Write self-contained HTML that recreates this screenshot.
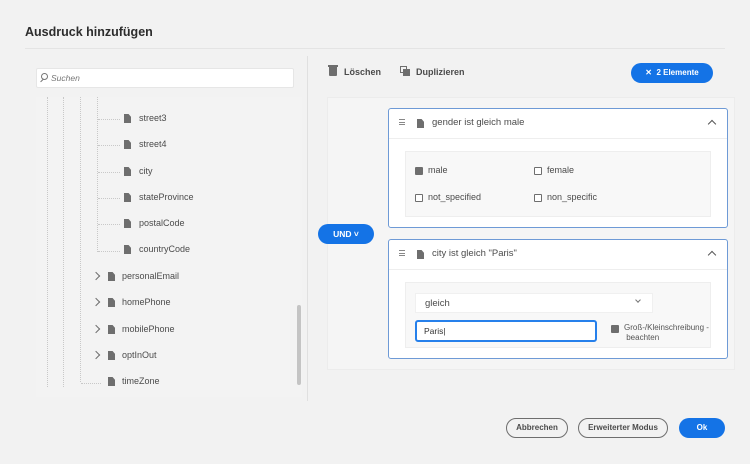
<!DOCTYPE html>
<html><head><meta charset="utf-8"><style>
*{box-sizing:border-box;margin:0;padding:0}
body{width:750px;height:464px;background:#f2f2f2;font-family:"Liberation Sans",sans-serif;color:#323232;position:relative;overflow:hidden;font-size:9px}
.a{position:absolute}
.doc{position:absolute;width:7px;height:9px;background:#6e6e6e;clip-path:polygon(0 0,65% 0,100% 30%,100% 100%,0 100%)}
.t{position:absolute;font-size:9px;color:#4b4b4b}
.vd{position:absolute;border-left:1px dotted #c8c8c8}
.hd{position:absolute;border-top:1px dotted #c8c8c8;width:22px}
.chev{position:absolute;width:6px;height:6px;border-right:1.5px solid #6e6e6e;border-top:1.5px solid #6e6e6e;transform:rotate(45deg)}
.card{position:absolute;left:388px;width:340px;background:#fff;border:1px solid #6e9ad6;border-radius:3px}
.hdr{height:30px;border-bottom:1px solid #eee;position:relative}
.ham{position:absolute;left:10px;top:10px;width:6px;height:6px;border-top:1px solid #888;border-bottom:1px solid #888}
.ham:after{content:"";position:absolute;left:0;top:2px;width:6px;border-top:1px solid #888}
.inner{position:absolute;left:16px;right:16px;background:#f8f8f8;border:1px solid #eee}
.cb{position:absolute;width:8px;height:8px;border:1.2px solid #6e6e6e;border-radius:1px;background:#fff}
.cb.on{background:#6e6e6e}
.btn{position:absolute;height:20px;border-radius:10px;font-size:8px;font-weight:bold;text-align:center;line-height:18px}
</style></head><body>
<div class="a" style="left:25px;top:25px;font-size:12.5px;font-weight:bold;color:#2c2c2c">Ausdruck hinzufügen</div>
<div class="a" style="left:25px;top:48px;width:700px;border-top:1px solid #e4e4e4"></div>
<div class="a" style="left:307px;top:56px;height:345px;border-left:1px solid #e0e0e0"></div>
<div class="a" style="left:36px;top:68px;width:258px;height:20px;background:#fff;border:1px solid #e6e6e6;border-radius:2px"></div>
<div class="a" style="left:41px;top:73px;width:7px;height:7px;border:1.2px solid #777;border-radius:50%"></div>
<div class="a" style="left:40px;top:80px;width:4px;border-top:1.2px solid #777;transform:rotate(-45deg)"></div>
<div class="a" style="left:51px;top:73px;font-size:8.5px;font-style:italic;color:#777">Suchen</div>
<div class="a" style="left:36px;top:97px;width:266px;height:300px;background:#f3f3f3"></div>
<div class="vd" style="left:47px;top:97px;height:290px"></div>
<div class="vd" style="left:63px;top:97px;height:290px"></div>
<div class="vd" style="left:80px;top:97px;height:285px"></div>
<div class="vd" style="left:97px;top:97px;height:155px"></div>
<div class="a" style="left:297px;top:305px;width:4px;height:80px;background:#c4c4c4;border-radius:2px"></div>
<div class="hd" style="left:98px;top:119px"></div><div class="doc" style="left:124px;top:114px"></div><div class="t" style="left:139px;top:113px">street3</div>
<div class="hd" style="left:98px;top:145px"></div><div class="doc" style="left:124px;top:140px"></div><div class="t" style="left:139px;top:139px">street4</div>
<div class="hd" style="left:98px;top:172px"></div><div class="doc" style="left:124px;top:167px"></div><div class="t" style="left:139px;top:166px">city</div>
<div class="hd" style="left:98px;top:198px"></div><div class="doc" style="left:124px;top:193px"></div><div class="t" style="left:139px;top:192px">stateProvince</div>
<div class="hd" style="left:98px;top:224px"></div><div class="doc" style="left:124px;top:219px"></div><div class="t" style="left:139px;top:218px">postalCode</div>
<div class="hd" style="left:98px;top:251px"></div><div class="doc" style="left:124px;top:245px"></div><div class="t" style="left:139px;top:244px">countryCode</div>
<div class="chev" style="left:93px;top:273px"></div><div class="doc" style="left:108px;top:272px"></div><div class="t" style="left:122px;top:271px">personalEmail</div>
<div class="chev" style="left:93px;top:299px"></div><div class="doc" style="left:108px;top:298px"></div><div class="t" style="left:122px;top:297px">homePhone</div>
<div class="chev" style="left:93px;top:326px"></div><div class="doc" style="left:108px;top:325px"></div><div class="t" style="left:122px;top:324px">mobilePhone</div>
<div class="chev" style="left:93px;top:352px"></div><div class="doc" style="left:108px;top:351px"></div><div class="t" style="left:122px;top:350px">optInOut</div>
<div class="hd" style="left:81px;top:383px;width:20px"></div><div class="doc" style="left:108px;top:377px"></div><div class="t" style="left:122px;top:376px">timeZone</div>
<div class="a" style="left:329px;top:67px;width:8px;height:9px;background:#6e6e6e;border-radius:0 0 1px 1px"></div>
<div class="a" style="left:328px;top:65px;width:10px;height:1.5px;background:#6e6e6e"></div>
<div class="a" style="left:344px;top:67px;font-size:9px;font-weight:bold;color:#4b4b4b">Löschen</div>
<div class="a" style="left:400px;top:66px;width:7px;height:7px;border:1.5px solid #6e6e6e"></div>
<div class="a" style="left:403px;top:69px;width:7px;height:7px;background:#6e6e6e"></div>
<div class="a" style="left:416px;top:67px;font-size:9px;font-weight:bold;color:#4b4b4b">Duplizieren</div>
<div class="btn" style="left:631px;top:63px;width:82px;background:#1473e6;color:#fff;line-height:20px">✕&nbsp; 2 Elemente</div>
<div class="a" style="left:327px;top:97px;width:408px;height:273px;background:#f5f5f5;border:1px solid #ececec"></div>
<div class="btn" style="left:318px;top:224px;width:56px;background:#1473e6;color:#fff;line-height:20px;font-size:8.5px">UND ˅</div>
<div class="card" style="top:108px;height:120px">
 <div class="hdr"><div class="ham"></div><div class="doc" style="left:28px;top:10px"></div><div class="a" style="left:43px;top:8px;font-size:9.5px;color:#4b4b4b">gender ist gleich male</div><div class="a" style="left:320px;top:12px;width:6px;height:6px;border-left:1.5px solid #555;border-top:1.5px solid #555;transform:rotate(45deg)"></div></div>
 <div class="inner" style="top:42px;height:66px">
  <div class="cb on" style="left:9px;top:15px"></div><div class="t" style="left:22px;top:13px">male</div>
  <div class="cb" style="left:128px;top:15px"></div><div class="t" style="left:141px;top:13px">female</div>
  <div class="cb" style="left:9px;top:42px"></div><div class="t" style="left:22px;top:40px">not_specified</div>
  <div class="cb" style="left:128px;top:42px"></div><div class="t" style="left:141px;top:40px">non_specific</div>
 </div>
</div>
<div class="card" style="top:239px;height:120px">
 <div class="hdr"><div class="ham"></div><div class="doc" style="left:28px;top:10px"></div><div class="a" style="left:43px;top:8px;font-size:9.5px;color:#4b4b4b">city ist gleich "Paris"</div><div class="a" style="left:320px;top:12px;width:6px;height:6px;border-left:1.5px solid #555;border-top:1.5px solid #555;transform:rotate(45deg)"></div></div>
 <div class="inner" style="top:42px;height:66px">
  <div class="a" style="left:9px;top:10px;width:238px;height:20px;background:#fff;border:1px solid #f0f0f0"><div class="a" style="left:9px;top:4px;font-size:9.5px;color:#4b4b4b">gleich</div><div class="a" style="left:220px;top:4px;width:4px;height:4px;border-right:1px solid #777;border-bottom:1px solid #777;transform:rotate(45deg)"></div></div>
  <div class="a" style="left:9px;top:37px;width:182px;height:22px;background:#fff;border:2px solid #2680eb;border-radius:3px"><div class="a" style="left:7px;top:4px;font-size:8.5px">Paris|</div></div>
  <div class="cb on" style="left:205px;top:42px"></div>
  <div class="a" style="left:218px;top:40px;font-size:8px;color:#555;line-height:10px">Groß-/Kleinschreibung -<br>&nbsp;beachten</div>
 </div>
</div>
<div class="btn" style="left:506px;top:418px;width:62px;border:1.5px solid #6e6e6e;color:#4b4b4b">Abbrechen</div>
<div class="btn" style="left:578px;top:418px;width:90px;border:1.5px solid #6e6e6e;color:#4b4b4b">Erweiterter Modus</div>
<div class="btn" style="left:679px;top:418px;width:46px;background:#1473e6;color:#fff;line-height:20px">Ok</div>
</body></html>
